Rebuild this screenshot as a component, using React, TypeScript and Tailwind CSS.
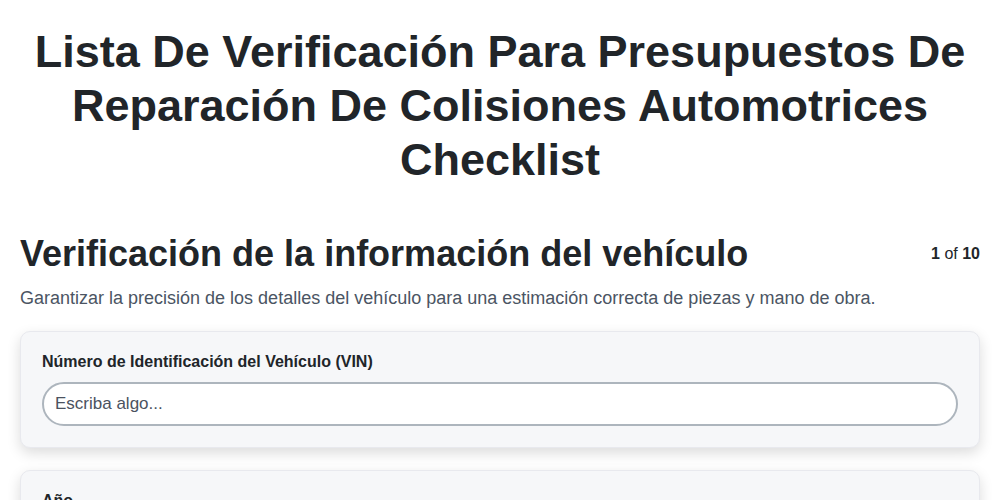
import React from "react";

const fields = [
  { label: "Número de Identificación del Vehículo (VIN)" },
  { label: "Año" },
  { label: "Marca" },
];

function FieldCard({ label }: { label: string }) {
  return (
    <div className="rounded-[10px] border border-[#e8e9ee] bg-[#f6f7f9] px-[21px] pt-[20px] pb-[21px] shadow-[0_5px_14px_rgba(0,0,0,0.14)]">
      <label className="block text-[16px] font-bold leading-[20px] text-[#212529]">{label}</label>
      <input
        type="text"
        placeholder="Escriba algo..."
        className="mt-[10px] block h-[44px] w-full rounded-full border-2 border-[#adb5bd] bg-white px-[11px] text-[17px] text-[#212529] placeholder:text-[#4b5260] outline-none"
      />
    </div>
  );
}

export default function App() {
  return (
    <div
      className="min-h-screen bg-white px-[20px] text-[#212529]"
      style={{ fontFamily: '"Liberation Sans", Arial, sans-serif' }}
    >
      <h1 className="pt-[25px] text-center text-[45px] font-bold leading-[54px] text-[#212529]">
        Lista De Verificación Para Presupuestos De Reparación De Colisiones Automotrices Checklist
      </h1>

      <div className="mt-[46px] flex items-start justify-between gap-4">
        <h2 className="text-[36px] font-bold leading-[42px]">Verificación de la información del vehículo</h2>
        <div className="pt-[9px] text-[16px] text-[#212529]">
          <span className="font-bold">1</span> of <span className="font-bold">10</span>
        </div>
      </div>
      <p className="mt-[11px] text-[18px] leading-[24px] text-[#4b5563]">
        Garantizar la precisión de los detalles del vehículo para una estimación correcta de piezas y mano de obra.
      </p>

      <div className="mt-[21px] flex flex-col gap-[22px] pb-10">
        {fields.map((f) => (
          <FieldCard key={f.label} label={f.label} />
        ))}
      </div>
    </div>
  );
}
